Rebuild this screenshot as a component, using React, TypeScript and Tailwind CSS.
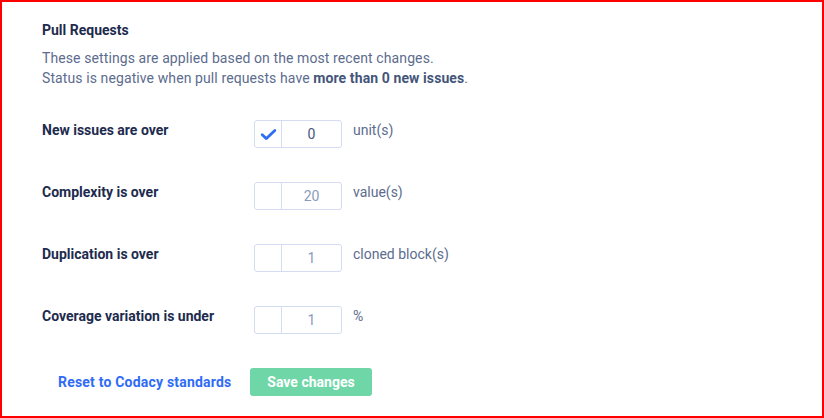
const rows = [
  { label: "New issues are over", value: "0", unit: "unit(s)", checked: true },
  { label: "Complexity is over", value: "20", unit: "value(s)", checked: false },
  { label: "Duplication is over", value: "1", unit: "cloned block(s)", checked: false },
  { label: "Coverage variation is under", value: "1", unit: "%", checked: false },
];

const App = () => {
  return (
    <div
      className="w-[824px] h-[418px] border-2 border-[#ff0000] bg-white text-[14px] leading-[20px]"
      style={{ fontFamily: "Roboto, 'Liberation Sans', sans-serif" }}
    >
      <div className="pl-[40px] pt-[18px]">
        <h2 className="font-bold text-[#1d2b4e]">Pull Requests</h2>
        <p className="mt-2 text-[#5c6c8e] tracking-[0.1px]">
          These settings are applied based on the most recent changes.
          <br />
          Status is negative when pull requests have{" "}
          <span className="font-bold text-[#44557a]">more than 0 new issues</span>.
        </p>

        <div className="mt-[32px] flex flex-col gap-[34px]">
          {rows.map((row, i) => (
            <div key={i} className="flex items-start">
              <div className="w-[212px] font-bold text-[#1d2b4e]">{row.label}</div>
              <div className="flex h-[28px] w-[88px] rounded-[3px] border border-[#d3dcf0]">
                <div className="flex w-[27px] items-center justify-center border-r border-[#d3dcf0]">
                  {row.checked && (
                    <svg width="17" height="13" viewBox="0 0 17 13" fill="none">
                      <path
                        d="M2.2 6.8 L6.4 10.6 L14.8 2.4"
                        stroke="#2e6ff2"
                        strokeWidth="2.8"
                        strokeLinecap="round"
                        strokeLinejoin="round"
                      />
                    </svg>
                  )}
                </div>
                <div
                  className={
                    "flex flex-1 items-center justify-center " +
                    (row.checked ? "text-[#45557a]" : "text-[#8b9bbd]")
                  }
                >
                  {row.value}
                </div>
              </div>
              <div className="ml-[11px] text-[#5c6c8e]">{row.unit}</div>
            </div>
          ))}
        </div>

        <div className="mt-[34px] flex items-center">
          <a className="ml-[16px] w-[192px] font-bold text-[#2f6cf6] tracking-[0.2px] cursor-pointer">
            Reset to Codacy standards
          </a>
          <button className="h-[28px] w-[122px] rounded-[3px] bg-[#6fd6a8] font-bold text-white">
            Save changes
          </button>
        </div>
      </div>
    </div>
  );
};

export default App;
